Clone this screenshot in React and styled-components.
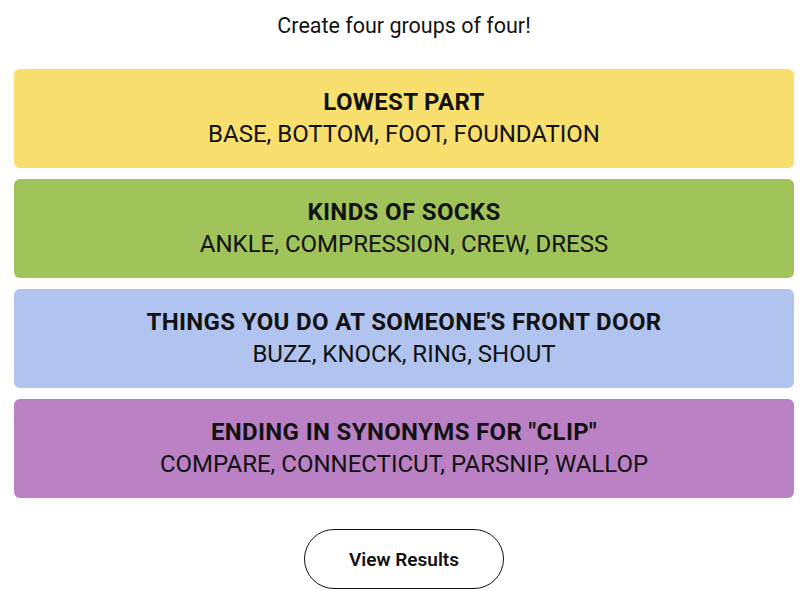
import React from 'react';
import styled, { createGlobalStyle } from 'styled-components';

const GlobalStyle = createGlobalStyle`
  body {
    margin: 0;
    background: #ffffff;
    font-family: Roboto, "Liberation Sans", sans-serif;
    color: #121212;
  }
`;

const Page = styled.main`
  display: flex;
  flex-direction: column;
  align-items: center;
  padding: 12px 14px 0;
`;

const Heading = styled.p`
  margin: 0;
  height: 28px;
  line-height: 28px;
  font-size: 21.5px;
  font-weight: 400;
`;

const Groups = styled.div`
  align-self: stretch;
  display: flex;
  flex-direction: column;
  gap: 11px;
  margin-top: 29px;
`;

const Group = styled.section`
  height: 99px;
  box-sizing: border-box;
  padding-bottom: 2px;
  border-radius: 6px;
  background: ${p => p.color};
  display: flex;
  flex-direction: column;
  align-items: center;
  justify-content: center;
  text-align: center;
`;

const Category = styled.h3`
  margin: 0;
  font-size: 24px;
  line-height: 32px;
  font-weight: 700;
  letter-spacing: 0.35px;
`;

const Words = styled.p`
  margin: 0;
  font-size: 24px;
  line-height: 32px;
  font-weight: 400;
`;

const ResultsButton = styled.button`
  margin-top: 31px;
  width: 200px;
  height: 60px;
  border: 1px solid #121212;
  border-radius: 30px;
  background: #ffffff;
  color: #121212;
  font-family: Roboto, "Liberation Sans", sans-serif;
  font-size: 19px;
  font-weight: 600;
  cursor: pointer;
`;

const groups = [
  { title: 'LOWEST PART', words: 'BASE, BOTTOM, FOOT, FOUNDATION', color: '#f9df6d' },
  { title: 'KINDS OF SOCKS', words: 'ANKLE, COMPRESSION, CREW, DRESS', color: '#a0c35a' },
  { title: "THINGS YOU DO AT SOMEONE'S FRONT DOOR", words: 'BUZZ, KNOCK, RING, SHOUT', color: '#b0c4ef' },
  { title: 'ENDING IN SYNONYMS FOR "CLIP"', words: 'COMPARE, CONNECTICUT, PARSNIP, WALLOP', color: '#ba81c5' },
];

const App = () => (
  <>
    <GlobalStyle />
    <Page>
      <Heading>Create four groups of four!</Heading>
      <Groups>
        {groups.map(g => (
          <Group key={g.title} color={g.color}>
            <Category>{g.title}</Category>
            <Words>{g.words}</Words>
          </Group>
        ))}
      </Groups>
      <ResultsButton>View Results</ResultsButton>
    </Page>
  </>
);

export default App;
